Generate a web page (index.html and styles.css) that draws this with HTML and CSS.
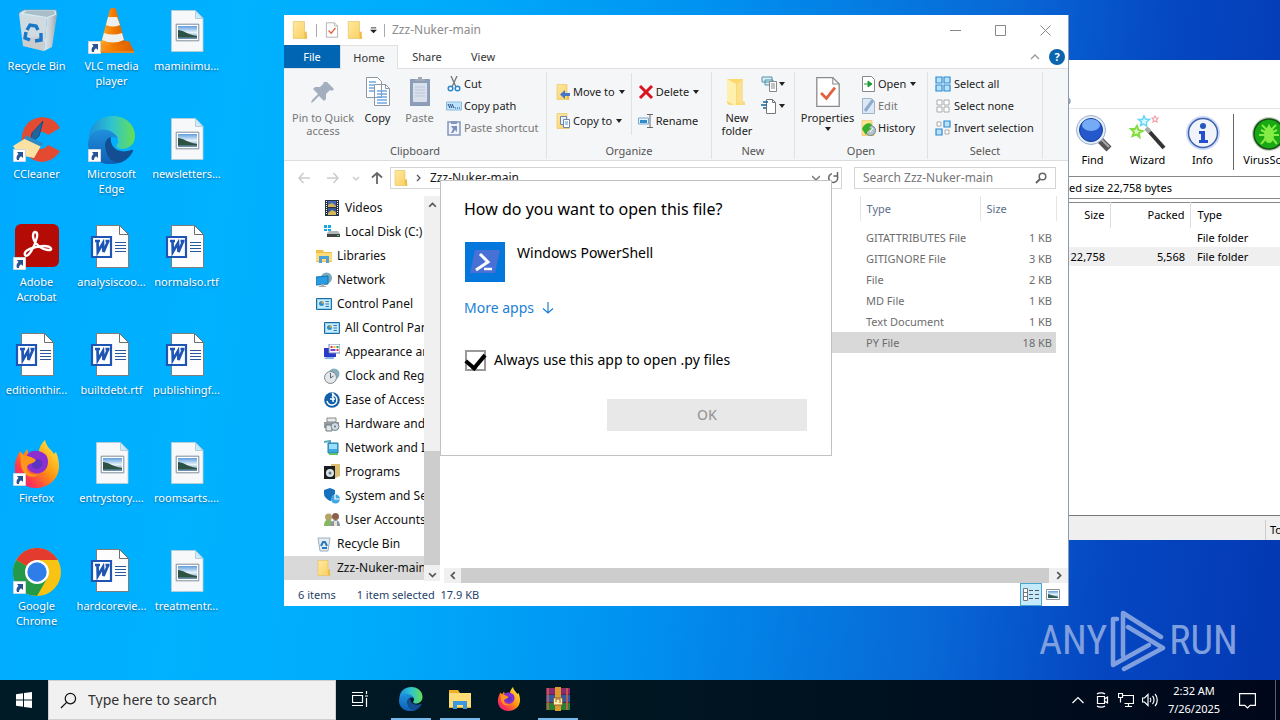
FILE: index.html
```
<!DOCTYPE html>
<html lang="en">
<head>
<meta charset="utf-8">
<title>Desktop</title>
<link rel="stylesheet" href="styles.css">
</head>
<body>
<svg class="defs" aria-hidden="true">
  <defs>
    <linearGradient id="gFolder" x1="0" y1="0" x2="1" y2="1"><stop offset="0" stop-color="#ffe9a0"/><stop offset="1" stop-color="#f9cf5f"/></linearGradient>
    <linearGradient id="gSky" x1="0" y1="0" x2="0" y2="1"><stop offset="0" stop-color="#5f9fe0"/><stop offset=".5" stop-color="#e4f1f8"/><stop offset="1" stop-color="#5c87a8"/></linearGradient>
    <linearGradient id="gEdgeA" x1="0" y1="0" x2="1" y2="0"><stop offset="0" stop-color="#1b8fdc"/><stop offset=".5" stop-color="#2fc4cf"/><stop offset="1" stop-color="#66e052"/></linearGradient>
    <linearGradient id="gEdgeB" x1="0" y1="0" x2="0" y2="1"><stop offset="0" stop-color="#2090dc"/><stop offset="1" stop-color="#0f5fb6"/></linearGradient>
    <linearGradient id="gFox" x1="1" y1="0" x2="0" y2="1"><stop offset="0" stop-color="#fff44f"/><stop offset=".45" stop-color="#ff980e"/><stop offset=".75" stop-color="#ff3750"/><stop offset="1" stop-color="#e0159a"/></linearGradient>
    <linearGradient id="gCone" x1="0" y1="0" x2="1" y2="0"><stop offset="0" stop-color="#ffab2d"/><stop offset=".5" stop-color="#f47b00"/><stop offset="1" stop-color="#dc5f00"/></linearGradient>
    <linearGradient id="gBin" x1="0" y1="0" x2="1" y2="0"><stop offset="0" stop-color="#dfe8ed"/><stop offset=".55" stop-color="#c2ccd2"/><stop offset="1" stop-color="#94a5b2"/></linearGradient>
    <symbol id="folder" viewBox="0 0 16 16"><path d="M2 .5h10v12.500l2 .5v2H2z" fill="url(#gFolder)" stroke="#e6bf5c" stroke-width=".6"/><path d="M12 10v5.500h2V9z" fill="#eebd45"/></symbol>
    <symbol id="shortcut" viewBox="0 0 13 13"><path d="M.5.5h12v12H.5z" fill="#fff" stroke="#cdd7df"/><path d="M4 3h6v6L8 7.200C6.300 8.500 6 9.500 6 11H4C3 8.500 3.600 6.500 5.500 5z" fill="#2a5396"/></symbol>
    <symbol id="word" viewBox="0 0 48 48"><path d="M8.500 1.500h23l9 9v33h-32z" fill="#fdfdfd" stroke="#7d7d7d"/><path d="M31.500 1.500v9h9z" fill="#fff" stroke="#6d6d6d"/><path d="M27 18.500h11M27 21.500h11M27 24.500h11M27 27.500h11" stroke="#2a579a" stroke-width="1.200"/><path d="M4 13h19v20H4z" fill="#fff" stroke="#1e55b5" stroke-width="2.200"/><path d="M7 17h5M9.500 17l.3 11 5.200-9 .5 9 4.700-11M17.500 17h4" fill="none" stroke="#1e55b5" stroke-width="2.700"/></symbol>
    <symbol id="picdoc" viewBox="0 0 48 48"><path d="M8.500 2.500h24l7.500 8v33H8.500z" fill="#f7f8f9" stroke="#c3ccd2" stroke-width=".8"/><path d="M32.500 2.500v8H40z" fill="#c9ebfa" stroke="#a9bfca" stroke-width=".7"/><path d="M13.200 16.200h22.600v16.600H13.200z" fill="#fff" stroke="#7e8c97"/><path d="M15 18h19v13H15z" fill="url(#gSky)"/><path d="M15 22c5 0 8 4 19 6v1.500H15z" fill="#2c5244"/></symbol>
    <symbol id="edge" viewBox="0 0 48 48"><path d="M1 25C0 8 12 0 25 0c13 0 22 9 22 20 0 8-6 13-13 13-6 0-7-3-4-6 1-9-8-12-15-10C8 18 3 23 1 25z" fill="url(#gEdgeA)"/><path d="M0 27C2 15 12 12 19 14c5 1 10 5 11 9-5-5-14-1-13 8 1 10 9 16 17 15C15 53 0 43 0 27z" fill="url(#gEdgeB)"/><path d="M17 29c0-4 2-7 6-8-2 9 7 18 20 13 2-1 3 0 1 3-5 8-12 11-17 9-6-2-10-9-10-17z" fill="#124e91"/></symbol>
    <symbol id="firefox" viewBox="0 0 48 48"><path d="M7 11l3 4 4-6 2 6c4-1 7-1 10 1C25 9 28 4 32 0c2 8 6 9 9 14l2-2c5 12 4 23-4 30-9 8-23 8-32 0C0 34 0 22 7 11z" fill="url(#gFox)"/><path d="M14 15c3-5 12-6 19 0 3 4 3 12-2 16-6 5-16 2-18-7z" fill="#8b2fd0"/><path d="M22 20c4-3 10 2 6 7-4 4-10 1-9-3z" fill="#5b34c4"/><path d="M7 12c4 5 10 3 16 8-2 4-8 3-9 7-1 5 5 9 12 7-8 7-17 0-18-9z" fill="#ff961c"/></symbol>
    <symbol id="panel" viewBox="0 0 16 16"><path d="M.5 2.500h15v11H.5z" fill="#8ed6f8" stroke="#246a9a"/><path d="M2 4h12v8H2z" fill="#c7edfd"/><circle cx="5.500" cy="7.500" r="2.500" fill="#2f8fc8"/><path d="M5.500 5v2.500H8A2.500 2.500 0 0 0 5.500 5z" fill="#f5a93b"/><path d="M9.500 5.500H13M9.500 8H13M9.500 10.500H13" stroke="#2b78ad"/></symbol>
    <symbol id="check-page" viewBox="0 0 24 30"><path d="M1.500 1.500h15l6 6v21h-21z" fill="#fff" stroke="#8a8a8a" stroke-width="1.200"/><path d="M16.500 1.500v6h6" fill="none" stroke="#8a8a8a"/><path d="M5.500 16l5 5 8-10" fill="none" stroke="#e2603c" stroke-width="2.600"/></symbol>
  </defs>
</svg>

<main class="desktop">
  <ul class="icons">
    <li class="shortcut-item"><svg class="big" viewBox="0 0 48 48"><path d="M6 5l5-3h32l1 5-8 4-28-3z" fill="#d5e9f3" stroke="#8d9ca5" stroke-width=".8"/><path d="M6 6l28 4-3 33-21-5z" fill="#d0dbe1"/><path d="M34 10l10-3-5 32-8 4z" fill="url(#gBin)"/><path d="M10 5l4-2h27l1 3-8 3z" fill="#a9bec8"/><path d="M10 31l20-3 1 15-21-5z" fill="#c3bcb4" opacity=".45"/><path d="M14 22l3-5 6 1 2 4M28 25l0 7-6 1M17 32l-5-2 1-6" fill="none" stroke="#1877c9" stroke-width="3.400"/></svg><span>Recycle Bin</span></li>
    <li class="shortcut-item"><svg class="big" viewBox="0 0 48 48"><path d="M11 33h30l5 10H5z" fill="url(#gCone)"/><path d="M9 43h37v2H8z" fill="#e88622"/><path d="M22 1q3-2 6 0l9 34q-12 7-24 0z" fill="url(#gCone)"/><path d="M20 9h9l3 8q-7 3-14 0zM16 25q9 3 18 0l2 7q-11 5-22 0z" fill="#eef0f0"/></svg><svg class="arrow"><use href="#shortcut"/></svg><span>VLC media player</span></li>
    <li class="shortcut-item"><svg class="big"><use href="#picdoc"/></svg><span>maminimu...</span></li>
    <li class="shortcut-item"><svg class="big" viewBox="0 0 48 48"><path d="M47 12C41-1 23-2 14 8 5 19 8 36 19 43c10 6 22 2 28-8L35 29c-4 6-13 5-15-2-2-9 9-15 15-8z" fill="#e34a32"/><path d="M30 5l-4 15-9 8 2-11z" fill="#23649e" stroke="#194f80"/><path d="M13 22l15 8-7 12-15-3-6-9z" fill="#fbe1a2"/><path d="M12 21l17 8" stroke="#2e8bc6" stroke-width="4"/></svg><svg class="arrow"><use href="#shortcut"/></svg><span>CCleaner</span></li>
    <li class="shortcut-item"><svg class="big"><use href="#edge"/></svg><svg class="arrow"><use href="#shortcut"/></svg><span>Microsoft Edge</span></li>
    <li class="shortcut-item"><svg class="big"><use href="#picdoc"/></svg><span>newsletters...</span></li>
    <li class="shortcut-item"><svg class="big" viewBox="0 0 48 48"><rect x="2" y="0" width="44" height="43" rx="6" fill="#b50b05"/><path d="M12 31c-2-5 10-9 19-9 8 0 9 5 4 4-9-1-15-9-15-14 0-6 5-5 4 1-2 9-9 22-12 18z" fill="none" stroke="#fff" stroke-width="2.400"/></svg><svg class="arrow"><use href="#shortcut"/></svg><span>Adobe Acrobat</span></li>
    <li class="shortcut-item"><svg class="big"><use href="#word"/></svg><span>analysiscoo...</span></li>
    <li class="shortcut-item"><svg class="big"><use href="#word"/></svg><span>normalso.rtf</span></li>
    <li class="shortcut-item"><svg class="big"><use href="#word"/></svg><span>editionthir...</span></li>
    <li class="shortcut-item"><svg class="big"><use href="#word"/></svg><span>builtdebt.rtf</span></li>
    <li class="shortcut-item"><svg class="big"><use href="#word"/></svg><span>publishingf...</span></li>
    <li class="shortcut-item"><svg class="big"><use href="#firefox"/></svg><svg class="arrow"><use href="#shortcut"/></svg><span>Firefox</span></li>
    <li class="shortcut-item"><svg class="big"><use href="#picdoc"/></svg><span>entrystory....</span></li>
    <li class="shortcut-item"><svg class="big"><use href="#picdoc"/></svg><span>roomsarts....</span></li>
    <li class="shortcut-item"><svg class="big" viewBox="0 0 48 48"><circle cx="24" cy="24" r="24" fill="#f9c313"/><path d="M24 24L3.200 12A24 24 0 0 1 44.800 12H24z" fill="#e33b2e"/><path d="M3.200 12A24 24 0 0 0 24 48l10.400-18L24 24z" fill="#249a48"/><circle cx="24" cy="24" r="12" fill="#fff"/><circle cx="24" cy="24" r="9.700" fill="#2f7de9"/></svg><svg class="arrow"><use href="#shortcut"/></svg><span>Google Chrome</span></li>
    <li class="shortcut-item"><svg class="big"><use href="#word"/></svg><span>hardcorevie...</span></li>
    <li class="shortcut-item"><svg class="big"><use href="#picdoc"/></svg><span>treatmentr...</span></li>
  </ul>

  <div class="watermark">
    <span>ANY</span>
    <svg viewBox="0 0 56 62"><g fill="none" stroke="#7f9fde" stroke-width="4.500" stroke-linejoin="round" stroke-linecap="round"><path d="M51 27L13 3v43M18 17l35 21-39 21"/><path d="M7 9H3v46l36-20"/></g></svg>
    <span>RUN</span>
  </div>

  <section class="window archive" aria-label="Archive manager">
    <nav class="archive-menu"><span>Help</span></nav>
    <div class="archive-tools">
      <button><svg viewBox="0 0 40 40"><path d="M27 27l9 9" stroke="#555" stroke-width="7"/><path d="M28 26l8 8" stroke="#aaa" stroke-width="2"/><circle cx="18" cy="17" r="14.500" fill="#e3edf8" stroke="#9cb1cf"/><circle cx="18" cy="17" r="11.500" fill="#2458cb" stroke="#173e92"/><ellipse cx="18" cy="12" rx="9" ry="6" fill="#75aaf5"/></svg>Find</button>
      <button><svg viewBox="0 0 40 40"><path d="M19 16l17 19" stroke="#333" stroke-width="4"/><path d="M18 15l4 4" stroke="#aaa" stroke-width="4"/><path d="M9 13l1.500 4 4 1-3.500 2 .5 4-3-2.500-4 1.500 1.500-4L3 16h4z" fill="#dff9bf" stroke="#83dc42" stroke-width="2"/><path d="M16 3l1.500 3 4 .5-3 2.500v4l-3-2-3 1.500 1-3.500-3-2.500h4z" fill="#d8f7ff" stroke="#63d7f5" stroke-width="1.500"/><path d="M27 3l1 2h2l-1.500 2 .5 2-2-1-2 1 .5-2L24 5h2z" fill="none" stroke="#f79eab" stroke-width="1.200"/></svg>Wizard</button>
      <button><svg viewBox="0 0 40 40"><circle cx="20" cy="20" r="17" fill="#cbd9f7"/><circle cx="20" cy="20" r="14.500" fill="#f0f3fa" stroke="#3f62ad" stroke-width="1.500"/><circle cx="20" cy="13" r="3" fill="#2456be"/><path d="M16 18h6v9h3v3h-9v-3h2v-6h-2z" fill="#234fd1"/></svg>Info</button>
      <button class="scan"><svg viewBox="0 0 40 40"><circle cx="20" cy="20" r="17" fill="#c4cfbe"/><circle cx="20" cy="20" r="15" fill="#18a915" stroke="#174f18" stroke-width="1.500"/><ellipse cx="20" cy="21" rx="5" ry="8" fill="#84ec45"/><path d="M13 11l5 5 2-4 2 4 5-5M10 21h20M12 30l5-6M28 30l-5-6M12 16l6 3M28 16l-6 3" stroke="#84ec45" stroke-width="2" fill="none"/></svg>VirusScan</button>
    </div>
    <div class="archive-path">unpacked size 22,758 bytes</div>
    <table class="archive-list">
      <thead><tr><th>Size</th><th>Packed</th><th>Type</th></tr></thead>
      <tbody><tr><td></td><td></td><td>File folder</td></tr><tr class="current"><td>22,758</td><td>5,568</td><td>File folder</td></tr></tbody>
    </table>
    <footer class="archive-status"><span>Total 1 folder</span></footer>
  </section>

  <section class="window explorer" aria-label="File Explorer">
    <header class="titlebar">
      <svg class="ic18"><use href="#folder"/></svg><i class="tick"></i>
      <svg class="ic16"><use href="#check-page"/></svg><svg class="ic18"><use href="#folder"/></svg>
      <svg class="qat" viewBox="0 0 8 8"><path d="M1 1h6" stroke="#222"/><path d="M0 3h8L4 7z" fill="#222"/></svg><i class="tick"></i>
      <h1>Zzz-Nuker-main</h1>
      <div class="sysbtns">
        <button aria-label="Minimize"><svg viewBox="0 0 11 11"><path d="M0 5.500h11"/></svg></button>
        <button aria-label="Maximize"><svg viewBox="0 0 11 11"><path d="M.5.5h10v10H.5z"/></svg></button>
        <button aria-label="Close"><svg viewBox="0 0 11 11"><path d="M.5.5l10 10M10.500.5l-10 10"/></svg></button>
      </div>
    </header>
    <nav class="tabs">
      <button class="file">File</button><button class="active">Home</button><button>Share</button><button>View</button>
      <div class="tabs-end"><svg class="fold" viewBox="0 0 10 6"><path d="M1 5l4-4 4 4" fill="none" stroke="#999" stroke-width="1.300"/></svg><button class="help" aria-label="Help">?</button></div>
    </nav>
    <div class="ribbon">
      <div class="group clipboard">
        <div class="tools">
          <button class="tall pin dim"><svg class="ic32" viewBox="0 0 32 32"><path d="M20 6l7 7-2 2-2-1-4 4 0 5-2 2-5-5-6 6-2 1 1-3 6-6-5-5 2-2h5l4-4-1-1z" fill="#a3afbe"/></svg>Pin to Quick access</button>
          <button class="tall copy"><svg class="ic32" viewBox="0 0 32 32"><path d="M4.500 1.500h11l4 4v16h-15zM12.500 8.500h11l4 4v17h-15z" fill="#fff" stroke="#8b97a4"/><path d="M7 6h7M7 9h5M7 12h5M7 15h5M15 15h10M15 18h10M15 21h10M15 24h10M15 27h10" stroke="#6fa8e4" stroke-width="1.300"/><path d="M23.500 8.500v4h4" fill="none" stroke="#8b97a4"/></svg>Copy</button>
          <button class="tall paste dim"><svg class="ic32" viewBox="0 0 32 32"><path d="M6.500 3.500h19v26h-19z" fill="#8d9fb8" stroke="#8799b4"/><path d="M9 7h14v19H9z" fill="#d9e0ec"/><path d="M11 5h10V3h-3V1h-4v2h-3z" fill="#a1aab8"/><path d="M11 11h10M11 14h10M11 17h10M11 20h10" stroke="#bac6d9"/></svg>Paste</button>
          <div class="stack">
            <button><svg viewBox="0 0 16 16"><path d="M5 0l5 11M11 0L6 11" stroke="#777" stroke-width="1.300"/><circle cx="4.500" cy="12.500" r="2.300" fill="none" stroke="#2d87cd" stroke-width="1.500"/><circle cx="11.500" cy="12.500" r="2.300" fill="none" stroke="#2d87cd" stroke-width="1.500"/></svg>Cut</button>
            <button><svg viewBox="0 0 16 16"><path d="M.5 4h15v8H.5z" fill="#bfe2fb" stroke="#8abce0"/><path d="M2 6l2 4M4 6l2 4M6 6l2 4M9 10h1M11 10h1M13 10h1" stroke="#174a80"/></svg>Copy path</button>
            <button class="dim"><svg viewBox="0 0 16 16"><path d="M2 2h12v13H2z" fill="#f0f3fa" stroke="#8497bd" stroke-width="1.500"/><path d="M5 1h6v3H5z" fill="#8497bd"/><path d="M5 6h6v6L9 10l-2 3H5l2-4z" fill="#7b91bd"/></svg>Paste shortcut</button>
          </div>
        </div>
        <h2>Clipboard</h2>
      </div>
      <div class="group organize">
        <div class="tools">
          <div class="stack two">
            <button><svg viewBox="0 0 16 16"><use href="#folder"/><path d="M15 9H10V6L5 10.500 10 15v-3h5z" fill="#4774cd"/></svg>Move to<i class="caret"></i></button>
            <button><svg viewBox="0 0 16 16"><use href="#folder"/><path d="M5.500 3.500h6v8h-6z" fill="#eaf3fc" stroke="#6d84ad"/><path d="M8.500 6.500h6v8h-6z" fill="#fff" stroke="#6d84ad"/><path d="M10 9h3M10 11h3" stroke="#5791d3"/></svg>Copy to<i class="caret"></i></button>
          </div>
          <div class="stack two ruled">
            <button><svg viewBox="0 0 16 16"><path d="M2 2l12 12M14 2L2 14" stroke="#d9141d" stroke-width="3"/></svg>Delete<i class="caret"></i></button>
            <button><svg viewBox="0 0 16 16"><path d="M.5 5h10v6H.5z" fill="#e3f4ff" stroke="#76a8d5"/><path d="M2 7h7v3H2z" fill="#318bca"/><path d="M9 1.500h6M12 1.500v13M9 14.500h6" stroke="#666"/></svg>Rename</button>
          </div>
        </div>
        <h2>Organize</h2>
      </div>
      <div class="group new">
        <div class="tools">
          <button class="tall folder-new"><svg class="ic32" viewBox="0 0 32 32"><path d="M6 3h16v22l2 1v3H8l-2-2z" fill="#fbd971"/><path d="M6 3l9 5v22l-9-5z" fill="#fff0ad"/><path d="M16 8l6-4v25l-6-3z" fill="#fae092"/></svg>New folder</button>
          <div class="stack narrow">
            <button aria-label="New item"><svg viewBox="0 0 16 16"><path d="M1 1h10v5H1zM4 4h8v5H4z" fill="#d8effa" stroke="#5391a6"/><path d="M8.500 5.500h7v10h-7z" fill="#fff" stroke="#888"/><path d="M10 8h4M10 10h4M10 12h4" stroke="#888"/></svg><i class="caret"></i></button>
            <button aria-label="Easy access"><svg viewBox="0 0 16 16"><path d="M5.500 1.500h6l3 3v11h-9z" fill="#fff" stroke="#777"/><path d="M11.500 1.500v3h3" fill="none" stroke="#777"/><path d="M2 4h5M0 7h6M2 10h3" stroke="#17659d" stroke-width="1.300"/></svg><i class="caret"></i></button>
          </div>
        </div>
        <h2>New</h2>
      </div>
      <div class="group open">
        <div class="tools">
          <button class="tall props"><svg class="ic32"><use href="#check-page"/></svg>Properties<i class="caret"></i></button>
          <div class="stack">
            <button><svg viewBox="0 0 16 16"><path d="M2.500.5h9l3 3v12h-12z" fill="#fff" stroke="#888"/><path d="M4 8h5M8 5l4 3-4 3z" fill="#1d9b37" stroke="#1d9b37"/></svg>Open<i class="caret"></i></button>
            <button class="dim"><svg viewBox="0 0 16 16"><path d="M2.500.5h9l3 3v12h-12z" fill="#dbe8f6" stroke="#a2b3c8"/><path d="M13 2L5 13" stroke="#8faaca" stroke-width="3"/></svg>Edit</button>
            <button><svg viewBox="0 0 16 16"><use href="#folder"/><circle cx="10.500" cy="10.500" r="5" fill="#b6c3ca" stroke="#6f8592"/><path d="M2 9c2-6 8-7 10-4l-3 3 3 1c-4 1-5 3-6 6z" fill="#36ad2d"/><path d="M10 12l3-4" stroke="#fff"/></svg>History</button>
          </div>
        </div>
        <h2>Open</h2>
      </div>
      <div class="group select">
        <div class="tools"><div class="stack">
          <button><svg viewBox="0 0 16 16"><g fill="#b7e1fc" stroke="#2d8bd0" stroke-width="1.200"><path d="M1 1h6v6H1zM9 1h6v6H9zM1 9h6v6H1zM9 9h6v6H9z"/></g></svg>Select all</button>
          <button><svg viewBox="0 0 16 16"><g fill="#fff" stroke="#aaa"><path d="M2 2h5v5H2zM9 2h5v5H9zM2 9h5v5H2zM9 9h5v5H9z"/></g></svg>Select none</button>
          <button><svg viewBox="0 0 16 16"><g fill="#b7e1fc" stroke="#2d8bd0" stroke-width="1.200"><path d="M9 1h6v6H9zM1 9h6v6H1z"/></g><path d="M2 2h4v4H2zM10 10h4v4h-4z" fill="#fff" stroke="#aaa"/></svg>Invert selection</button>
        </div></div>
        <h2>Select</h2>
      </div>
    </div>
    <div class="address">
      <div class="history">
        <svg viewBox="0 0 12 12"><path d="M12 6H1M5.500 1L1 6l4.500 5" stroke="#ccc"/></svg><svg viewBox="0 0 12 12"><path d="M0 6h11M6.500 1L11 6l-4.500 5" stroke="#ccc"/></svg>
        <svg class="small" viewBox="0 0 8 8"><path d="M1 3l3 3 3-3" stroke="#ccc"/></svg><svg viewBox="0 0 12 12"><path d="M6 12V1M1 5.500L6 1l5 4.500" stroke="#666" stroke-width="1.800"/></svg>
      </div>
      <div class="path"><svg class="ic16"><use href="#folder"/></svg><svg class="sep" viewBox="0 0 6 8"><path d="M1 1l3 3-3 3" fill="none" stroke="#555" stroke-width="1.300"/></svg><span>Zzz-Nuker-main</span>
        <svg class="drop" viewBox="0 0 8 6"><path d="M0 1l4 4 4-4" fill="none" stroke="#777" stroke-width="1.500"/></svg><svg class="refresh" viewBox="0 0 12 12"><path d="M10 3.500A4.500 4.500 0 1 1 5 1.600M10.500 0v4H6.500" fill="none" stroke="#666" stroke-width="1.500"/></svg></div>
      <div class="search"><input type="text" placeholder="Search Zzz-Nuker-main" aria-label="Search Zzz-Nuker-main"><svg viewBox="0 0 12 12"><circle cx="7.500" cy="4.500" r="3.300" fill="none" stroke="#666" stroke-width="1.500"/><path d="M5 7L1 11" stroke="#666" stroke-width="2"/></svg></div>
    </div>
    <div class="content">
      <div class="tree">
        <ul>
          <li class="deep"><svg viewBox="0 0 16 16"><path d="M1 0h14v16H1z" fill="#263344"/><path d="M4 1h8v6H4z" fill="#486bb1"/><path d="M4 8h8v7H4z" fill="#375a91"/><path d="M4 5l4-2 4 3v1H4zM4 13l4-3 4 2v3H4z" fill="#d5b559"/><path d="M2.500 1v14M13.500 1v14" stroke="#fff" stroke-dasharray="1 1"/></svg>Videos</li>
          <li class="deep"><svg viewBox="0 0 16 16"><path d="M0 1h3v3H0zM4 1h3v3H4zM0 5h3v2H0zM4 5h3v2H4z" fill="#18a8e8"/><path d="M3 9l2-2h9l2 3v3H3z" fill="#b2b9bc"/><path d="M3 10h13v3H3z" fill="#444"/><path d="M13 11h2v1h-2z" fill="#42dd64"/></svg>Local Disk (C:)</li>
          <li><svg viewBox="0 0 16 16"><path d="M0 2h7l1 2h8v10H0z" fill="#f2bf4e"/><path d="M0 5h16v8H0z" fill="#ffdc78"/><path d="M3 15V8h10v7h-3v-4H6v4z" fill="#4f9fdb"/></svg>Libraries</li>
          <li><svg viewBox="0 0 16 16"><circle cx="10.500" cy="6" r="5.500" fill="#7aa9bc"/><path d="M0 5l12-1v8l-12 1z" fill="#2b9be1" stroke="#1473af"/><path d="M5 12v2H3v1h7v-1H8v-2" fill="#aaa"/></svg>Network</li>
          <li><svg><use href="#panel"/></svg>Control Panel</li>
          <li class="deep"><svg><use href="#panel"/></svg>All Control Pan</li>
          <li class="deep"><svg viewBox="0 0 16 16"><path d="M0 4h12v9H0z" fill="#2b3bc9"/><path d="M2 13h8v2H0z" fill="#8ab6e7"/><path d="M5 0h11v9H5z" fill="#fff" stroke="#7587b8"/><path d="M6.500 2h2v2h-2zM12.500 5h2v2h-2z" fill="#dd364b"/><path d="M9.500 2h2v2h-2z" fill="#eeb82f"/><path d="M12.500 2h2v2h-2z" fill="#2c9c46"/><path d="M6.500 5h5v2h-5z" fill="#8543c7"/></svg>Appearance an</li>
          <li class="deep"><svg viewBox="0 0 16 16"><circle cx="10" cy="6" r="5.500" fill="#85afbd"/><circle cx="6.500" cy="9.500" r="6" fill="#e4e7e9" stroke="#81898d"/><path d="M6.500 5v5l3-2" fill="none" stroke="#536d7e"/></svg>Clock and Regi</li>
          <li class="deep"><svg viewBox="0 0 16 16"><circle cx="8" cy="8" r="7.800" fill="#1260aa"/><path d="M3 9a5 5 0 1 0 5-6M8 1l2 2-2 2M6 7h5M9 5v5" fill="none" stroke="#fff" stroke-width="1.500"/></svg>Ease of Access</li>
          <li class="deep"><svg viewBox="0 0 16 16"><path d="M3 2h9v4H3z" fill="#e8ecee" stroke="#888"/><path d="M0 6h15v6H0z" fill="#939ba0"/><path d="M2 9h6v6H2z" fill="#e0e5e7" stroke="#737c82"/><circle cx="11" cy="10.500" r="4" fill="#cfdae1" stroke="#74818a"/><circle cx="11" cy="10.500" r="1" fill="#597489"/></svg>Hardware and S</li>
          <li class="deep"><svg viewBox="0 0 16 16"><path d="M0 2l6-1v6l4 4" fill="none" stroke="#5caac1" stroke-width="2"/><path d="M4 3h10v10H4z" fill="#3ca9df" stroke="#257cab"/><path d="M5 4h8v5H5z" fill="#9bdefa"/><path d="M5 13h9v2H5z" fill="#5fc364"/></svg>Network and In</li>
          <li class="deep"><svg viewBox="0 0 16 16"><path d="M7 0h9v12l-7 3z" fill="#dcbf73"/><path d="M0 2h11v13H0z" fill="#171d22"/><circle cx="6" cy="9" r="4" fill="#dae1e5"/><circle cx="6" cy="9" r="1.500" fill="#657787"/></svg>Programs</li>
          <li class="deep"><svg viewBox="0 0 16 16"><path d="M0 2l6-2 5 2v5c0 4-5 6-5 6s-6-3-6-7z" fill="#1671bc"/><circle cx="11.500" cy="11" r="4.500" fill="#43a9e4"/><path d="M11 6v5h5" fill="none" stroke="#fff" stroke-width="1.200"/></svg>System and Sec</li>
          <li class="deep"><svg viewBox="0 0 16 16"><circle cx="4.500" cy="5" r="3.500" fill="#b5a369"/><path d="M0 14c0-9 9-9 9 0z" fill="#88b563"/><circle cx="11.500" cy="4.500" r="3.500" fill="#8b614e"/><path d="M7 14c0-8 9-8 9 0z" fill="#8195ad"/><path d="M10 9h3v5h-3z" fill="#f0dfcc"/></svg>User Accounts</li>
          <li><svg viewBox="0 0 16 16"><path d="M2 2h12l-2 13H4z" fill="#e4edf2" stroke="#9caeb9"/><path d="M5 10l2-4h2l2 4M6 12h5" fill="none" stroke="#2779bd" stroke-width="2"/></svg>Recycle Bin</li>
          <li class="selected"><svg><use href="#folder"/></svg>Zzz-Nuker-main</li>
        </ul>
        <div class="vscroll"><svg viewBox="0 0 8 6"><path d="M1 5l3-3 3 3"/></svg><i></i><svg viewBox="0 0 8 6"><path d="M1 1l3 3 3-3"/></svg></div>
      </div>
      <div class="files">
        <table>
          <thead><tr><th class="name"></th><th>Type</th><th class="size">Size</th></tr></thead>
          <tbody>
            <tr><td></td><td>GITATTRIBUTES File</td><td>1 KB</td></tr>
            <tr><td></td><td>GITIGNORE File</td><td>3 KB</td></tr>
            <tr><td></td><td>File</td><td>2 KB</td></tr>
            <tr><td></td><td>MD File</td><td>1 KB</td></tr>
            <tr><td></td><td>Text Document</td><td>1 KB</td></tr>
            <tr class="chosen"><td></td><td>PY File</td><td>18 KB</td></tr>
          </tbody>
        </table>
        <div class="hscroll"><svg viewBox="0 0 6 8"><path d="M5 1L2 4l3 3"/></svg><i></i><svg viewBox="0 0 6 8"><path d="M1 1l3 3-3 3"/></svg></div>
      </div>
    </div>
    <footer class="status"><span>6 items</span><span>1 item selected&nbsp; 17.9 KB</span>
      <div class="views"><button class="on" aria-label="Details"><svg viewBox="0 0 16 14"><path d="M.5.500h4v12h-4zM.5 4.500h4M.5 8.500h4" fill="#fff" stroke="#777"/><path d="M6 2.500h4M6 6.500h4M6 10.500h4M12 2.500h4M12 6.500h4M12 10.500h4" stroke="#555"/></svg></button><button aria-label="Thumbnails"><svg viewBox="0 0 16 14"><path d="M1.500 1.500h13v10h-13z" fill="#fff" stroke="#8a94a1"/><path d="M3 3h10v7H3z" fill="url(#gSky)"/><path d="M3 6l10 3v1H3z" fill="#2f5e56"/></svg></button></div>
    </footer>
  </section>

  <section class="dialog" role="dialog" aria-labelledby="question">
    <h2 id="question">How do you want to open this file?</h2>
    <div class="app"><svg viewBox="0 0 40 40"><path d="M0 0h40v40H0z" fill="#0377db"/><path d="M10 8h25l-5 23H5z" fill="#4870d5"/><path d="M15 12l8 8-12 8" fill="none" stroke="#fff" stroke-width="3"/><path d="M19 27h8" stroke="#fff" stroke-width="2.500"/></svg><span>Windows PowerShell</span></div>
    <a href="#apps">More apps<svg viewBox="0 0 12 14"><path d="M6 1v11M1 7.500L6 12l5-4.500" fill="none" stroke="#1a7fd6" stroke-width="1.200"/></svg></a>
    <label><input type="checkbox" checked>Always use this app to open .py files</label>
    <button disabled>OK</button>
  </section>
</main>

<footer class="taskbar">
  <button class="start" aria-label="Start"><svg viewBox="0 0 16 16"><path d="M0 2.200l7-1V7.500H0zM8 1l8-1v7.500H8zM0 8.500h7v6.300l-7-1zM8 8.500h8V16l-8-1.100z" fill="#fff"/></svg></button>
  <label class="find"><svg viewBox="0 0 18 18"><circle cx="11" cy="7" r="5.500" fill="none" stroke="#111" stroke-width="1.300"/><path d="M7 11l-6 6" stroke="#111" stroke-width="1.300"/></svg><input type="text" placeholder="Type here to search" aria-label="Search"></label>
  <div class="apps">
    <button aria-label="Task View"><svg class="tv" viewBox="0 0 16 16"><path d="M.500 4.500h10v7H.5zM0 1.500h11M0 14.500h11M14.500 0v3M14.500 7v9M13 5h3" fill="none" stroke="#fff" stroke-width="1.200"/></svg></button>
    <button class="run" aria-label="Edge"><svg><use href="#edge"/></svg></button>
    <button class="run" aria-label="File Explorer"><svg viewBox="0 0 24 24"><path d="M1 3h9l2 3h11v15H1z" fill="#f1ae27"/><path d="M1 6h22v14H1z" fill="#ffdc75"/><path d="M5 22v-8h14v8h-4v-4H9v4z" fill="#3b98dd"/></svg></button>
    <button aria-label="Firefox"><svg><use href="#firefox"/></svg></button>
    <button class="run" aria-label="WinRAR"><svg viewBox="0 0 24 24"><path d="M0 1h24v6H0z" fill="#8b2870"/><path d="M0 8h24v7H0z" fill="#2f5aa9"/><path d="M0 16h24v7H0z" fill="#287f37"/><path d="M0 7.500h24M0 15.500h24" stroke="#5f2540"/><path d="M2 1v22M21 1v22" stroke="#d4653e" stroke-width="1.500"/><path d="M9 0h6v24H9z" fill="#df9a2d"/><path d="M7.500 11h9v7h-9z" fill="#fff0b0" stroke="#92622b"/><path d="M10 15v-3h4v4" fill="none" stroke="#92622b"/></svg></button>
  </div>
  <div class="tray">
    <svg viewBox="0 0 16 16"><path d="M2.500 11L8 5.500l5.500 5.500"/></svg>
    <svg viewBox="0 0 16 16"><path d="M3.500 4.500h7v7h-7zM10.500 7l3-2v6l-3-2M3 2c2-1.500 6-1.500 8 0M3 14c2 1.500 6 1.500 8 0"/></svg>
    <svg viewBox="0 0 16 16"><path d="M4.500 3.500h11v8h-9M10.500 11.500v3M7 14.500h7M.5 1.500h4v4h-4zM2.500 5.500v5"/></svg>
    <svg viewBox="0 0 16 16"><path d="M.5 6h2L6 2.500v11L2.500 10h-2zM8 6c1 1 1 3 0 4M10.500 4c2 2 2 6 0 8M13 2c3 3 3 9 0 12"/></svg>
    <time>2:32 AM<br>7/26/2025</time>
    <svg class="note" viewBox="0 0 16 16"><path d="M.5 1.500h15v11h-5L8 15l-2.500-2.500h-5z"/></svg>
    <i class="peek"></i>
  </div>
</footer>
</body>
</html>
```
FILE: styles.css
```
* { box-sizing: border-box; }
body { margin: 0; height: 100vh; overflow: hidden; display: flex; flex-direction: column; font: 11px/16px "Noto Sans", "Open Sans", sans-serif; color: #1a1a1a; }
button { font: inherit; color: inherit; border: 0; background: none; padding: 0; }
input { font: inherit; }
h1, h2 { margin: 0; font: inherit; }
ul { list-style: none; margin: 0; padding: 0; }
svg { flex: none; display: block; }
.defs { position: absolute; width: 0; height: 0; }

.desktop { flex: 1; min-height: 0; position: relative; overflow: hidden; background: linear-gradient(97deg, #00aaff 0%, #00b2ff 18%, #00aafb 34%, #0092f0 52%, #0868d6 74%, #0548c2 86%, #0338b2 100%); }
.icons { display: grid; grid-template-columns: repeat(3, 75px); grid-auto-rows: 108px; padding-top: 8px; margin-left: -1px; }
.shortcut-item { position: relative; display: flex; flex-direction: column; align-items: center; text-align: center; color: #fff; line-height: 15px; text-shadow: 0 1px 2px rgba(0, 40, 80, .6); }
.shortcut-item span { max-width: 72px; }
.big { width: 48px; height: 48px; margin-bottom: 2px; }
.arrow { position: absolute; left: 14px; top: 33px; width: 13px; height: 13px; }

.window { position: absolute; background: #fff; }
.watermark { position: absolute; left: 1039px; top: 610px; display: flex; align-items: center; gap: 3px; color: #7f9fde; font: 400 40px/60px "Roboto Condensed", "Open Sans Condensed", "Liberation Sans Narrow", "Roboto", sans-serif; }
.watermark svg { width: 56px; height: 62px; }

.archive { left: 980px; right: 0; top: 60px; height: 480px; overflow: hidden; display: flex; flex-direction: column; color: #000; }
.archive-menu { height: 49px; padding: 32px 0 0 67px; border-bottom: 1px solid #e4e4e4; color: #777; }
.archive-tools { height: 67px; display: flex; padding: 4px 0 0 85px; }
.archive-tools button { flex: none; width: 55px; display: flex; flex-direction: column; align-items: center; }
.archive-tools svg { width: 40px; height: 40px; margin-bottom: -1px; }
.archive-tools .scan { width: 70px; border-left: 1px solid #666; margin: 1px 0 6px 3px; }
.archive-tools .scan svg { margin-bottom: -2px; }
.archive-path { height: 23px; border: solid #888; border-width: 1px 0; padding: 3px 108px 0 0; text-align: right; }
.archive-list { border-collapse: collapse; width: 100%; table-layout: fixed; margin-top: 3px; border-top: 1px solid #888; }
.archive-list th { height: 25px; font-weight: 400; border-right: 1px solid #ddd; }
.archive-list th, .archive-list td { padding: 0 5px; text-align: right; }
.archive-list td { height: 19px; line-height: 19px; }
.archive-list th:nth-child(1) { width: 130px; }
.archive-list th:nth-child(2) { width: 80px; }
.archive-list th:last-child, .archive-list td:last-child { text-align: left; padding-left: 7px; border: 0; }
.archive-list .current { background: #efefef; }
.archive-status { margin-top: auto; height: 25px; background: #efefef; border-top: 1px solid #777; padding: 4px 0 2px 285px; white-space: nowrap; }
.archive-status span { display: block; border-left: 1px solid #ccc; padding-left: 4px; line-height: 20px; }

.explorer { left: 284px; top: 15px; width: 785px; height: 591px; display: flex; flex-direction: column; border-right: 1px solid #8b9bb5; }
.titlebar { height: 30px; display: flex; align-items: center; gap: 6px; padding-left: 7px; }
.ic18 { width: 18px; height: 18px; }
.ic16 { width: 16px; height: 16px; }
.qat { width: 7px; height: 7px; }
.tick { width: 1px; height: 13px; background: #aaa; margin: 0 1px; }
.titlebar h1 { color: #8c8c8c; font-size: 12px; }
.sysbtns { margin-left: auto; display: flex; }
.sysbtns button { width: 45px; height: 28px; display: grid; place-items: center; }
.sysbtns svg { width: 11px; height: 11px; fill: none; stroke: #888; }
.tabs { height: 24px; display: flex; border-bottom: 1px solid #e1e1e3; }
.tabs > button { width: 56px; color: #333; }
.tabs .file { background: #0065b3; color: #fff; }
.tabs .active { width: 58px; height: 24px; background: #f5f6f7; border: 1px solid #e1e1e3; border-bottom: 0; }
.tabs > .active + button { margin-left: 1px; }
.tabs-end { margin-left: auto; display: flex; align-items: center; gap: 9px; padding-right: 3px; }
.fold { width: 10px; height: 6px; }
.help { width: 16px; height: 16px; border-radius: 50%; background: #0a64ae; color: #fff; font-weight: 700; line-height: 16px; }

.ribbon { height: 92px; flex: none; display: flex; background: #f5f6f7; border-bottom: 1px solid #dcdddf; padding: 3px 0 1px; color: #222; }
.group { display: flex; flex-direction: column; border-right: 1px solid #e1e2e4; flex: none; }
.group h2 { margin-top: auto; text-align: center; color: #555; }
.tools { display: flex; padding-top: 1px; }
.clipboard { width: 263px; }
.organize { width: 165px; }
.new { width: 83px; }
.open { width: 133px; }
.select { width: 115px; }
.tall { display: flex; flex-direction: column; align-items: center; line-height: 13px; gap: 3px; padding-top: 3px; }
.ic32 { width: 32px; height: 32px; }
.dim { color: #777; }
.pin { width: 78px; }
.copy { width: 31px; }
.paste { width: 53px; }
.folder-new { width: 50px; padding: 3px 6px 0; }
.props { width: 65px; }
.stack { display: flex; flex-direction: column; white-space: nowrap; }
.stack button { height: 22px; display: flex; align-items: center; gap: 2px; }
.stack svg { width: 16px; height: 16px; }
.stack.two { padding: 4px 0 0 8px; }
.stack.two button { height: 29px; }
.stack.ruled { border-left: 1px solid #e1e2e4; margin-left: 6px; padding-left: 6px; }
.stack.narrow { margin-left: -1px; }
.caret { border: 3px solid transparent; border-top: 4px solid #222; border-bottom: 0; margin-left: 2px; flex: none; }
.stack.narrow .caret { margin: 0; }
.props .caret { margin: 0; }
.select .stack { padding-left: 7px; }
.select .stack button { gap: 3px; }

.address { height: 34px; flex: none; display: flex; align-items: center; padding: 0 12px 0 14px; }
.history { display: flex; align-items: center; gap: 17px; width: 92px; }
.history svg { width: 12px; height: 12px; fill: none; stroke-width: 1.5; }
.history .small { width: 8px; margin: 0 0 0 -4px; }
.history svg:last-child { margin-left: -6px; }
.path { flex: 1; height: 22px; border: 1px solid #d5d5d5; display: flex; align-items: center; padding: 0 2px; font-size: 12px; }
.sep { width: 6px; height: 8px; margin: 0 8px 0 7px; }
.drop { width: 8px; height: 6px; margin-left: auto; }
.refresh { width: 12px; height: 12px; margin-left: 7px; }
.search { width: 202px; height: 22px; margin-left: 12px; border: 1px solid #d5d5d5; display: flex; align-items: center; padding: 0 8px; }
.search input { flex: 1; min-width: 0; border: 0; padding: 0; font-size: 12px; color: #777; }
.search input::placeholder { color: #767676; opacity: 1; }
.search svg { width: 12px; height: 12px; }

.content { flex: 1; min-height: 0; display: flex; padding-top: 1px; }
.tree { width: 156px; display: flex; color: #111; padding-bottom: 2px; }
.tree ul { flex: 1; min-width: 0; overflow: hidden; }
.tree li { height: 24px; display: flex; align-items: center; gap: 5px; padding-left: 32px; white-space: nowrap; font-size: 12px; overflow: hidden; }
.tree .deep { padding-left: 40px; }
.tree li svg { width: 16px; height: 16px; }
.tree .selected { background: #d9d9d9; }
.vscroll { width: 16px; background: #f0f0f0; display: flex; flex-direction: column; align-items: center; padding: 4px 0 1px; }
.vscroll svg, .hscroll svg { width: 9px; height: 9px; fill: none; stroke: #555; stroke-width: 1.5; }
.vscroll i { width: 16px; height: 114px; background: #cdcdcd; margin: auto 0 6px; }
.files { flex: 1; display: flex; flex-direction: column; min-width: 0; padding-left: 4px; }
.files table { border-collapse: collapse; table-layout: fixed; width: 612px; color: #6d6d6d; }
.files th { text-align: left; font-weight: 400; color: #5c6f8c; height: 25px; border-right: 1px solid #e5e5e5; padding: 0 6px; }
.files thead::after { content: ""; display: block; height: 6px; }
.files .name { width: 416px; }
.files .size { width: 76px; }
.files th:nth-child(2) { width: 120px; }
.files td { height: 21px; padding: 0 6px; }
.files td:last-child { text-align: right; padding-right: 4px; }
.chosen { background: #d9d9d9; }
.hscroll { margin-top: auto; height: 15px; background: #f0f0f0; display: flex; align-items: center; justify-content: space-between; padding: 0 4px; }
.hscroll i { flex: 1; height: 15px; background: #cdcdcd; margin: 0 6px 0 4px; }
.status { height: 23px; flex: none; display: flex; align-items: center; gap: 21px; padding-left: 14px; color: #26436b; }
.views { margin-left: auto; display: flex; align-self: stretch; padding-right: 4px; }
.views button { width: 22px; display: grid; place-items: center; border: 1px solid transparent; }
.views .on { background: #c4eafb; border-color: #4aa5cf; }
.views svg { width: 16px; height: 14px; }

.dialog { position: absolute; left: 440px; top: 180px; width: 392px; height: 276px; background: #fff; border: 1px solid #c2c2c2; padding: 16px 24px 16px 23px; display: flex; flex-direction: column; align-items: flex-start; color: #000; font-size: 14px; line-height: 22px; }
.dialog h2 { font-size: 16px; line-height: 24px; margin-bottom: 21px; }
.app { display: flex; gap: 12px; padding-left: 1px; margin-bottom: 15px; }
.app svg { width: 40px; height: 40px; }
.dialog a { color: #1a7fd6; text-decoration: none; display: flex; align-items: center; gap: 8px; margin-bottom: 30px; }
.dialog a svg { width: 12px; height: 14px; }
.dialog label { display: flex; align-items: center; gap: 8px; }
.dialog input { appearance: none; width: 21px; height: 21px; margin: 0 0 0 1px; border: 2px solid #999; background: #fff; display: grid; place-items: center; }
.dialog input::after { content: ""; width: 9px; height: 15px; border: solid #000; border-width: 0 4px 4px 0; rotate: 40deg; translate: 0 -2px; }
.dialog button { align-self: flex-end; width: 200px; height: 32px; margin-top: 28px; background: #e8e8e8; color: #999; font-weight: 500; }

.taskbar { height: 40px; flex: none; display: flex; background: linear-gradient(90deg, #001b26 0%, #001722 50%, #00071a 100%); color: #fff; }
.start { width: 48px; display: grid; place-items: center; }
.start svg { width: 16px; height: 16px; }
.find { width: 288px; background: #f1f1f1; border: 1px solid #cfcfcf; display: flex; align-items: center; gap: 11px; padding-left: 11px; }
.find svg { width: 17px; height: 17px; }
.find input { flex: 1; min-width: 0; border: 0; padding: 0; background: none; font-size: 14px; }
.find input::placeholder { color: #333; opacity: 1; }
.apps { display: flex; gap: 1px; }
.apps button { width: 48px; display: grid; place-items: center; border-bottom: 2px solid transparent; }
.apps button:first-child { margin-right: 2px; }
.apps svg { width: 24px; height: 24px; }
.apps .tv { width: 16px; height: 16px; }
.apps .run { border-bottom-color: #76b9ed; background-clip: padding-box; width: 40px; margin: 0 4px; }
.tray { margin-left: auto; display: flex; align-items: center; gap: 8px; }
.tray svg { width: 16px; height: 16px; fill: none; stroke: #fff; stroke-width: 1.2; }
.tray time { text-align: center; line-height: 18px; width: 56px; }
.tray svg:first-child { margin-left: 0; }
.tray .note { width: 17px; height: 17px; margin-left: 9px; }
.peek { width: 1px; height: 40px; background: #56606c; margin: 0 4px 0 11px; }
```
